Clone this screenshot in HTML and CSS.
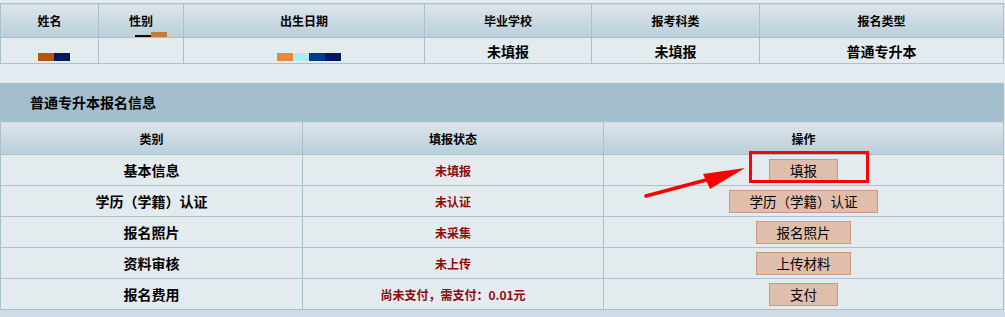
FILE: index.html
```html
<!DOCTYPE html>
<html lang="zh-CN">

<head>
    <meta charset="UTF-8">
    <title>报名信息</title>
    <link rel="stylesheet" href="styles.css">
</head>

<body>
    <div class="page">
        <table class="info-table">
            <thead>
                <tr>
                    <th class="c-name">姓名</th>
                    <th class="c-sex">性别<span class="mask mask-sex"><i class="k"></i><i class="o2"></i></span></th>
                    <th class="c-birth">出生日期</th>
                    <th class="c-school">毕业学校</th>
                    <th class="c-subject">报考科类</th>
                    <th>报名类型</th>
                </tr>
            </thead>
            <tbody>
                <tr>
                    <td><span class="mask"><i class="o1"></i><i class="n1"></i></span></td>
                    <td></td>
                    <td><span class="mask"><i class="o2"></i><i class="c1"></i><i class="b1"></i><i class="n1"></i></span></td>
                    <td>未填报</td>
                    <td>未填报</td>
                    <td>普通专升本</td>
                </tr>
            </tbody>
        </table>

        <div class="section">
            <div class="section-title">普通专升本报名信息</div>
            <table class="apply-table">
                <thead>
                    <tr>
                        <th class="c-type">类别</th>
                        <th class="c-state">填报状态</th>
                        <th>操作</th>
                    </tr>
                </thead>
                <tbody>
                    <tr>
                        <td>基本信息</td>
                        <td class="state">未填报</td>
                        <td><button class="btn btn-sm">填报</button></td>
                    </tr>
                    <tr>
                        <td>学历（学籍）认证</td>
                        <td class="state">未认证</td>
                        <td><button class="btn btn-lg">学历（学籍）认证</button></td>
                    </tr>
                    <tr>
                        <td>报名照片</td>
                        <td class="state">未采集</td>
                        <td><button class="btn">报名照片</button></td>
                    </tr>
                    <tr>
                        <td>资料审核</td>
                        <td class="state">未上传</td>
                        <td><button class="btn">上传材料</button></td>
                    </tr>
                    <tr>
                        <td>报名费用</td>
                        <td class="state">尚未支付，需支付：0.01元</td>
                        <td><button class="btn btn-sm">支付</button></td>
                    </tr>
                </tbody>
            </table>
        </div>

        <!-- annotation -->
        <div class="mark-box"></div>
        <svg class="mark-arrow" width="110" height="40" viewBox="0 0 110 40">
            <line x1="2" y1="31" x2="62" y2="15" stroke="#ff0000" stroke-width="3.5" stroke-linecap="round" />
            <polygon points="59,9 101,3 66,24" fill="#ff0000" />
        </svg>
    </div>
</body>

</html>
```

FILE: styles.css
```css
body {
    margin: 0;
    padding: 0;
    background-color: #e3eaf0;
    font-family: "Microsoft YaHei", "Noto Sans CJK SC", sans-serif;
}

.page {
    position: relative;
    width: 1005px;
    height: 317px;
    padding-top: 3px;
    box-sizing: border-box;
    overflow: hidden;
    background: linear-gradient(#e3eaf0 308px, #cfdce5 308px);
}

table {
    border-collapse: collapse;
    table-layout: fixed;
    width: 1004px;
}

th,
td {
    border: 1px solid #a9c0ce;
    text-align: center;
    padding: 0;
    color: #000;
}

th {
    font-size: 12px;
    font-weight: bold;
    background: linear-gradient(#dde5ea, #b9cfda);
}

/* top info table */
.info-table thead tr {
    height: 34px;
}

.info-table tbody tr {
    height: 26px;
}

.info-table td {
    font-size: 14px;
    font-weight: bold;
    background-color: #e4ebef;
    line-height: 16px;
}

.c-name {
    width: 97px;
}

.c-sex {
    width: 84px;
    position: relative;
}

.c-birth {
    width: 240px;
}

.c-school {
    width: 166px;
}

.c-subject {
    width: 167px;
}

/* redacted blocks */
.mask {
    display: inline-flex;
    vertical-align: middle;
    margin: 12px 0 0 9px;
}

.mask i {
    display: block;
    width: 16px;
    height: 8px;
}

.mask-sex {
    position: absolute;
    left: 36px;
    bottom: 0;
    margin: 0;
    align-items: flex-end;
}

.mask-sex .k {
    height: 2px;
    background-color: #140800;
}

.mask-sex .o2 {
    height: 5px;
    background-color: #c67a3a;
}

.o1 {
    background-color: #b0541a;
}

.o2 {
    background-color: #e4883a;
}

.c1 {
    background-color: #b0eaf0;
}

.b1 {
    background-color: #003a8c;
}

.n1 {
    background-color: #001a5c;
}

/* apply section */
.section {
    margin-top: 19px;
}

.section-title {
    width: 1004px;
    height: 38px;
    line-height: 38px;
    background-color: #a3bfcd;
    padding-left: 30px;
    box-sizing: border-box;
    font-size: 14px;
    font-weight: bold;
}

.apply-table thead tr {
    height: 33px;
}

.apply-table tbody tr {
    height: 31px;
}

.apply-table td {
    font-size: 14px;
    font-weight: bold;
    background-color: #e4ebef;
}

.c-type {
    width: 301px;
}

.c-state {
    width: 300px;
}

.apply-table td.state {
    font-size: 12px;
    color: #8f0a0a;
}

.btn {
    height: 23px;
    width: 95px;
    padding: 0;
    border: 1px solid #c99a80;
    background-color: #dfbfac;
    font-family: inherit;
    font-size: 13.5px;
    color: #000;
    vertical-align: middle;
}

.btn-sm {
    width: 69px;
}

.btn-lg {
    width: 149px;
}

.mark-box {
    position: absolute;
    left: 749px;
    top: 151px;
    width: 114px;
    height: 26px;
    border: 3px solid #ff0000;
}

.mark-arrow {
    position: absolute;
    left: 644px;
    top: 165px;
}
```
